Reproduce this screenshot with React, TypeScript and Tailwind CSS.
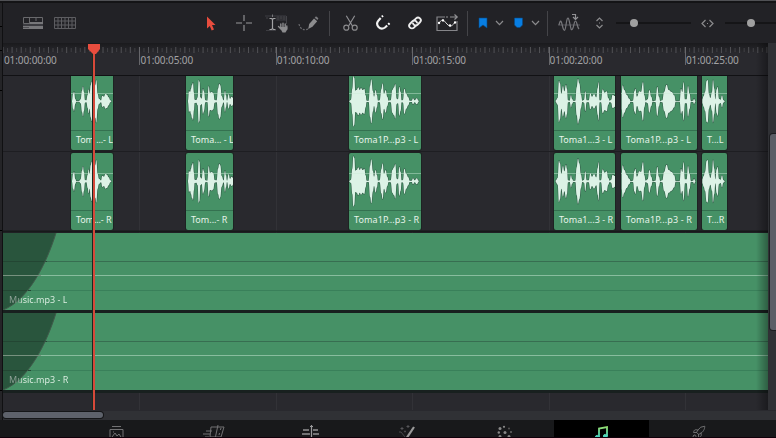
import React from "react";
import { Rocket } from "lucide-react";

type Wave = number[][];

// Envelopes are [x, half amplitude] pairs in thirds of a pixel.
const W1: Wave = [[3, 2], [6, 22], [9, 29], [13, 7], [16, 1], [24, 1], [29, 6], [33, 32], [36, 45], [39, 28], [42, 4], [46, 3], [50, 20], [53, 36], [56, 22], [59, 48], [62, 60], [65, 25], [70, 32], [73, 50], [76, 64], [80, 22], [84, 8], [90, 3], [94, 17], [99, 14], [103, 22], [108, 20], [113, 12], [118, 3], [121, 1]];
const W2: Wave = [[6, 3], [9, 32], [12, 28], [15, 38], [18, 50], [21, 56], [24, 26], [26, 5], [31, 4], [35, 12], [38, 64], [41, 58], [43, 12], [47, 8], [51, 38], [54, 30], [58, 3], [64, 2], [68, 46], [72, 26], [78, 28], [82, 24], [86, 4], [92, 3], [96, 38], [100, 53], [103, 48], [107, 16], [113, 3], [117, 32], [120, 18], [123, 2], [128, 22], [132, 8], [137, 14], [143, 8]];
const W3: Wave = [[1, 2], [6, 5], [10, 38], [13, 76], [16, 70], [19, 32], [23, 34], [28, 42], [32, 34], [36, 40], [41, 34], [46, 38], [50, 18], [53, 2], [59, 2], [63, 46], [67, 66], [72, 30], [75, 14], [80, 34], [84, 18], [87, 2], [92, 3], [97, 36], [101, 54], [105, 22], [110, 34], [115, 14], [119, 2], [125, 3], [130, 34], [135, 42], [139, 52], [143, 8], [147, 6], [151, 44], [155, 28], [158, 3], [162, 4], [166, 38], [172, 22], [178, 12], [182, 2], [188, 2], [192, 9], [197, 3], [203, 9], [209, 2]];
const W4: Wave = [[5, 3], [11, 10], [15, 62], [18, 54], [22, 22], [27, 46], [31, 30], [36, 50], [39, 38], [42, 3], [47, 2], [51, 19], [54, 8], [58, 2], [64, 2], [68, 42], [72, 68], [76, 54], [81, 20], [85, 2], [90, 4], [94, 30], [98, 3], [104, 3], [109, 24], [114, 14], [120, 22], [127, 12], [131, 40], [134, 58], [137, 3], [141, 3], [146, 36], [152, 26], [158, 30], [163, 10], [167, 2], [171, 4], [176, 20], [183, 16]];
const W5: Wave = [[2, 24], [5, 48], [10, 34], [17, 20], [25, 8], [29, 1], [36, 2], [40, 30], [43, 38], [48, 14], [55, 30], [60, 28], [66, 58], [70, 18], [74, 2], [80, 6], [85, 34], [91, 14], [95, 1], [103, 2], [109, 44], [114, 14], [118, 1], [124, 3], [129, 28], [137, 50], [143, 34], [152, 28], [160, 18], [164, 1], [176, 1], [180, 38], [184, 28], [188, 58], [192, 6], [197, 6], [201, 46], [206, 22], [210, 1], [216, 2], [219, 8], [223, 2]];
const W6: Wave = [[1, 6], [5, 16], [9, 28], [14, 62], [17, 64], [21, 22], [25, 10], [30, 28], [33, 64], [37, 38], [40, 6], [44, 36], [47, 44], [51, 8], [56, 5], [60, 18], [64, 4], [68, 1]];

const CLIPS = [
  { box: "ml-[68px] w-[42px] tracking-[-0.1px]", w: 42, wave: W1, l: "Tom ...- L", r: "Tom...- R" },
  { box: "ml-[73px] w-[47px] tracking-normal", w: 47, wave: W2, l: "Toma... - L", r: "Tom...- R" },
  { box: "ml-[116px] w-[72px] tracking-[0.1px]", w: 72, wave: W3, l: "Toma1P...p3 - L", r: "Toma1P...p3 - R" },
  { box: "ml-[133px] w-[61px] tracking-normal", w: 61, wave: W4, l: "Toma1...3 - L", r: "Toma1...3 - R" },
  { box: "ml-[6px] w-[76px] tracking-[0.15px]", w: 76, wave: W5, l: "Toma1P...p3 - L", r: "Toma1P...p3 - R" },
  { box: "ml-[5px] w-[25px] tracking-normal", w: 25, wave: W6, l: "T...L", r: "T...R" },
];

function outline(wave: Wave) {
  const pts = [...wave.map(([x, a]) => [x, 85 - a]), ...[...wave].reverse().map(([x, a]) => [x, 85 + a])];
  return pts
    .map(([x, y], i) => {
      if (i === 0) return `M${x} ${y}`;
      const [px, py] = pts[i - 1];
      const mid = (px + x) / 2;
      return `C${mid} ${py} ${mid} ${y} ${x} ${y}`;
    })
    .join("") + "Z";
}

function Clip({ box, w, wave, label }: { box: string; w: number; wave: Wave; label: string }) {
  return (
    <div className={`${box} h-[77px] shrink-0 overflow-hidden rounded-[2px] bg-[#469166] shadow-[0_0_0_1px_#1d2322]`}>
      <svg className="block h-[57px]" width={w} height="57" viewBox={`0 0 ${w * 3} 171`}>
        <path d={outline(wave)} fill="#dcf2e6" stroke="#315b47" strokeWidth="3.4" paintOrder="stroke" strokeLinejoin="round" />
        <path d={`M0 61.5H${w * 3}`} stroke="#c9ead6" strokeOpacity=".45" strokeWidth="3" />
      </svg>
      <div className="h-5 overflow-hidden whitespace-nowrap border-t border-[#347150] pl-[5px] pt-[2px] text-[9px] leading-[13px] text-[#e6f4ea]">{label}</div>
    </div>
  );
}

function ClipRow({ side }: { side: "l" | "r" }) {
  return (
    <div className="flex h-20 items-start">
      {CLIPS.map((c, i) => (
        <Clip key={i} box={c.box} w={c.w} wave={c.wave} label={c[side]} />
      ))}
    </div>
  );
}

function Music({ label }: { label: string }) {
  return (
    <div className="relative h-20 border-b-[3px] border-[#18201f] bg-[#469166]">
      <svg className="block" width="766" height="77" viewBox="0 0 766 77">
        <path d="M0 28.5H766" stroke="#376e51" />
        <path d="M0 57.5H766" stroke="#39805a" />
        <path d="M0 0H53C43 32 25 67 0 77Z" fill="#29553d" />
        <path d="M0 28.5H44M0 57.5H28" stroke="#234633" />
        <path d="M53 0C43 32 25 67 0 77" fill="none" stroke="#40594a" />
        <path d="M0 42.5H766" stroke="#88bd9e" />
        <path d="M0 42.5H38" stroke="#77917f" />
      </svg>
      <span className="absolute left-[6px] top-[60px] bg-[linear-gradient(100deg,#8ea297_0_11px,#e6f4ea_15px)] bg-clip-text text-[9px] leading-[13px] text-transparent">{label}</span>
    </div>
  );
}

function Icon({ place, w, h, children }: { place: string; w: number; h: number; children: React.ReactNode }) {
  return (
    <svg className={`${place} block shrink-0`} width={w} height={h} viewBox={`0 0 ${w} ${h}`} fill="none" stroke="#8b8b8d" strokeWidth="1.2">
      {children}
    </svg>
  );
}

const Sep = ({ place }: { place: string }) => <div className={`${place} h-[25px] w-px shrink-0 bg-[#444448]`} />;

function Toolbar() {
  return (
    <div className="flex h-10 items-center overflow-hidden bg-[#222226]">
      <Icon place="ml-[20px]" w={20} h={12}>
        <path d="M.5 .5H19.5V6.5H.5ZM6.5 .5V6.5M13 .5V4" stroke="#69696c" strokeWidth="1" />
        <path d="M7 5H20V7H7ZM0 9H20V12H0Z" fill="#77777a" stroke="none" />
        <path d="M0 8H20" stroke="#55555a" strokeWidth="1" />
        <path d="M0 10.5H6" stroke="#505054" strokeWidth="1" />
      </Icon>
      <Icon place="ml-[11px]" w={22} h={12}>
        <path d="M.5 .5H21.5V11.5H.5ZM.5 4H21M.5 8H21M4 0V12M7.5 0V12M11 0V12M14.5 0V12M18 0V12" stroke="#5d5d61" strokeWidth="1" />
      </Icon>
      <Icon place="ml-[130px]" w={11} h={15}>
        <path d="M1 .5 9.5 9H6L8 13.5 5.7 14.5 3.8 10 1 12.5Z" fill="#e84d3e" stroke="none" />
      </Icon>
      <Icon place="ml-[19px]" w={16} h={16}>
        <path d="M8 0V6M8 10V16M0 8H6M10 8H16" stroke="#98989a" strokeWidth="1.1" />
      </Icon>
      <Icon place="ml-[12px]" w={25} h={19}>
        <path d="M1 2H22M2 16.5H12" stroke="#3d3d42" />
        <path d="M1 3H23V7H12V3" fill="#303035" stroke="none" />
        <path d="M3 3V5M14 2V6M17 2V5M20 2V6M22.5 2V10" stroke="#424247" strokeWidth="1" />
        <path d="M5.5 4.5H7.5L8.5 5.5 9.5 4.5H11.5M8.5 5V14.5M5.5 15.5H7.5L8.5 14.5 9.5 15.5H11.5" stroke="#a3a3a5" />
        <path d="M8.5 .5V3" stroke="#77777a" strokeWidth="1" />
        <path d="M14.5 12.5 17 15M16.8 10V14M19 9.3V14M21.2 10V14M22.8 12V15" stroke="#8c8c8e" strokeWidth="1.4" strokeLinecap="round" />
        <path d="M15.5 13H23.2V15.5L21.5 18.5H18.5Z" fill="#8c8c8e" stroke="none" />
      </Icon>
      <Icon place="ml-[9px]" w={21} h={17}>
        <path d="M1 9C2 14 6 16 10 14" stroke="#69696d" strokeDasharray="2 1.4" />
        <path d="M10.2 14 11.2 9 16 3.6 19.2 6.2 14.4 11.8Z" fill="#8c8c8e" stroke="none" />
        <path d="M16.7 2.8 18 1.2 20.4 3.3 19.5 5Z" fill="#7c7c7f" stroke="none" />
      </Icon>
      <Sep place="ml-[10px]" />
      <Icon place="ml-[12px]" w={17} h={17}>
        <path d="M4.3 .8 10.6 11.2M12.7 .8 6.4 11.2" stroke="#8e8e92" strokeWidth="1.2" />
        <circle cx="4.3" cy="12.7" r="2.5" />
        <circle cx="12.7" cy="12.7" r="2.5" />
      </Icon>
      <Icon place="ml-[16px]" w={16} h={16}>
        <path d="M5.7 3 3.5 5.5C-.3 10 5.2 16 10 12.5L12.2 10.5" stroke="#f1f1f1" strokeWidth="2.1" />
        <path d="M6.8 1.8 8 .8M13.2 9.4 14.6 8.2" stroke="#fff" strokeWidth="2.1" />
      </Icon>
      <Icon place="ml-[16px]" w={16} h={16}>
        <g transform="rotate(-45 8 8)" stroke="#ededed" strokeWidth="1.9">
          <path d="M6.5 10.5H4A2.7 2.7 0 0 1 4 5H7.5A2.7 2.7 0 0 1 9.8 9" strokeLinecap="round" />
          <path d="M9.5 5.5H12A2.7 2.7 0 0 1 12 11H8.5A2.7 2.7 0 0 1 6.2 7" strokeLinecap="round" />
        </g>
      </Icon>
      <Icon place="ml-[12px] -mt-px" w={24} h={18}>
        <path d="M10 3H2V16.5H22V7" stroke="#858589" />
        <path d="M11 3H13M15 3H22M19.5 .5 22.2 3 19.5 5.5" stroke="#919194" />
        <path d="M4 9C8 3.5 9 7 12 10S16 13 20 8.5" stroke="#ddd" strokeWidth="1" />
        <path d="M8 6.5h.1M15 11.5h.1M20 8.5h.1M4 9h.1" stroke="#fff" strokeWidth="2.3" strokeLinecap="round" />
      </Icon>
      <Sep place="ml-[8px]" />
      <Icon place="ml-[10px]" w={10} h={12}>
        <path d="M1 1H9V11L5 8 1 11Z" fill="#087ee2" stroke="#064a87" strokeWidth=".6" />
      </Icon>
      <Icon place="ml-[7px]" w={9} h={6}><path d="M1 1 4.5 4.7 8 1" /></Icon>
      <Icon place="ml-[9px]" w={11} h={12}>
        <path d="M1.5 1H9.5V8L7 10.5H4L1.5 8Z" fill="#087ee2" stroke="#064a87" strokeWidth=".6" />
      </Icon>
      <Icon place="ml-[7px]" w={9} h={6}><path d="M1 1 4.5 4.7 8 1" /></Icon>
      <Sep place="ml-[7px]" />
      <Icon place="ml-[9px]" w={24} h={20}>
        <path d="M1 12H23" stroke="#55555a" strokeWidth="1" />
        <path d="M2 12C4 3 5 12 6 15S8 19 9 12 11 2 12.5 9 14 18 15.5 16 17 8 18.5 8 20 14 22 16" stroke="#77777b" />
        <path d="M15 1.5H18.5V6M16 4 18.5 6.5 21 4" stroke="#929295" />
      </Icon>
      <Icon place="ml-[14px]" w={9} h={12}>
        <path d="M1.5 4 4.5 1 7.5 4M1.5 8 4.5 11 7.5 8M4 6H5" />
      </Icon>
      <Slider place="ml-[12px] w-[75px]" knob="ml-[13.5px]" />
      <Icon place="ml-[10px]" w={13} h={9}>
        <path d="M4.5 1 1 4.5 4.5 8M8.5 1 12 4.5 8.5 8M6 4.5H7" />
      </Icon>
      <Slider place="ml-[11px] w-[51px]" knob="ml-[22px]" />
    </div>
  );
}

function Slider({ place, knob }: { place: string; knob: string }) {
  return (
    <div className={`${place} flex h-2 shrink-0 items-center bg-[linear-gradient(transparent_3px,#151517_3px_5px,transparent_5px)]`}>
      <div className={`${knob} size-2 rounded-full bg-[#a0a0a0]`} />
    </div>
  );
}

const MAJORS = [0, 1, 2, 3, 4, 5];
const TIMES = ["01:00:00:00", "01:00:05:00", "01:00:10:00", "01:00:15:00", "01:00:20:00", "01:00:25:00"];

function Ruler() {
  return (
    <div className="relative h-[33px] overflow-hidden border-b border-[#111114] bg-[linear-gradient(#1a1a1d,#29292e_10px)]">
      <svg className="absolute left-0 top-0" width="766" height="32">
        {Array.from({ length: 169 }, (_, i) => (
          <path key={i} d={`M${(i * 4.547).toFixed(2)} ${i % 2 ? 5 : 4}v${i % 2 ? 4 : 6}`} stroke={i % 2 ? "#414145" : "#525256"} />
        ))}
        {MAJORS.slice(1).map((i) => (
          <path key={i} d={`M${Math.round(i * 136.4) + 0.5} 4V22`} stroke="#66666a" />
        ))}
      </svg>
      <div className="flex pl-px pt-[9px] text-[10px] leading-[16px] tracking-[-0.1px] text-[#a2a2a4]">
        {TIMES.map((t) => (
          <span key={t} className="w-[136.4px] shrink-0">{t}</span>
        ))}
      </div>
    </div>
  );
}

const TABS = [
  <g key="m"><path d="M1 4.5H14V15H1ZM3 1.5H12" /><path d="M3 12 6 8 8 11 10 9 12 12M4 7h1" /></g>,
  <g key="c"><path d="M0 6H6M-3 9H4M-1 12H3M5 2H18L15 12H4ZM12 0 9 14" /><path d="M15 3 14.4 5M13.5 8 13 10" /></g>,
  <g key="e"><path d="M0 5H6M-1 9H7M1 13H6M10 5H15M10 9H16M10 13H17" strokeWidth="2.2" /><path d="M8.5 0V15M7 1.5H10" strokeWidth="1.2" stroke="#9a9a9c" /></g>,
  <g key="f"><path d="M6 14 14 2" stroke="#999" strokeWidth="2.2" /><path d="M2 2V5M.5 3.5H3.5M8 0V3M6.5 1.5H9.5" stroke="#555558" /><path d="M-1 7H1L5 12M5 5.5V7.5M4 6.5H6" stroke="#48484b" /></g>,
  <g key="k" fill="#888" stroke="none"><circle cx="7" cy="1.8" r="1.1" /><circle cx="3" cy="3.5" r="1.5" /><circle cx="1.8" cy="7.5" r="1.2" /><circle cx="3" cy="11.5" r="1.5" /><circle cx="8" cy="7.5" r="1.5" /><circle cx="12" cy="3.5" r="1" fill="#555" /><circle cx="14" cy="7" r="1" fill="#666" /><circle cx="12" cy="11.5" r="1.5" /></g>,
  <g key="n" stroke="url(#note)" fill="url(#note)"><path d="M5 12V3.5L13 2V11" fill="none" strokeWidth="1.8" /><ellipse cx="3.4" cy="12" rx="2" ry="1.6" /><ellipse cx="11.4" cy="11" rx="2" ry="1.6" /></g>,
];

function Nav() {
  return (
    <div className="flex h-[18px] overflow-hidden border-b border-[#10000a] bg-[#18191b] pl-[68px]">
      {TABS.map((t, i) => (
        <div key={i} className={`flex shrink-0 justify-center pt-[5px] ${i === 5 ? "ml-px w-[95px] bg-black" : "w-[97px]"}`}>
          <svg className="overflow-visible" width="16" height="16" viewBox="0 0 16 16" fill="none" stroke="#727274">
            <defs><linearGradient id="note" gradientUnits="userSpaceOnUse" x1="0" y1="0" x2="0" y2="14"><stop stopColor="#a1df62" /><stop offset="1" stopColor="#37d4d5" /></linearGradient></defs>
            {t}
          </svg>
        </div>
      ))}
      <div className="flex w-[98px] justify-center pt-[5px]"><Rocket size={15} strokeWidth={1.5} color="#747476" /></div>
    </div>
  );
}

export default function App() {
  return (
    <div className="flex h-[438px] w-[776px] flex-col overflow-hidden bg-[#29292e] font-['Noto_Sans','Open_Sans',sans-serif]">
      <div className="h-[3px] shrink-0 border-b-2 border-[#141416] bg-[#505155]" />
      <div className="flex h-[417px]">
        <div className="flex w-[3px] shrink-0 flex-col border-r border-[#101012] bg-[#242427]">
          <div className="h-6 border-b border-black" />
          <div className="h-6 border-b border-black" />
          <div className="h-10 border-b border-black" />
          <div className="h-[140px] border-b border-black" />
          <div className="h-[160px] border-b border-black" />
        </div>
        <div className="min-w-0 grow">
          <Toolbar />
          <div className="flex h-[367px]">
            <div className="relative w-[765px] shrink-0">
              <Ruler />
              <div className="relative h-[334px] overflow-hidden bg-[#29292e]">
                <svg className="absolute inset-0" width="766" height="334">
                  {MAJORS.slice(1).map((i) => (
                    <path key={i} d={`M${Math.round(i * 136.4) + 0.5} 0V334`} stroke="#323237" />
                  ))}
                  <path d="M0 75.5H766" stroke="#1e1e22" />
                  <path d="M0 155.5H766" stroke="#17191a" strokeWidth="2" />
                </svg>
                <div className="relative -mt-[3px]">
                  <ClipRow side="l" />
                  <ClipRow side="r" />
                  <Music label="Music.mp3 - L" />
                  <Music label="Music.mp3 - R" />
                </div>
              </div>
              <div className="absolute right-0 top-0 h-full w-3 bg-gradient-to-r from-transparent to-black/35" />
              <svg className="absolute left-[84px] top-0" width="14" height="367">
                <path d="M5.5 8V367" stroke="#172b22" />
                <path d="M7 8V367" stroke="#d6493a" strokeWidth="2" />
                <path d="M1 1H13V6L9 11H6L1 6Z" fill="#e84d3e" />
              </svg>
            </div>
            <div className="w-2 shrink-0 bg-[#303135] pt-[91px]">
              <div className="ml-[2px] h-[196px] rounded-l-[3px] bg-[#5b5e66] shadow-[0_0_0_1px_#1c1d20]" />
            </div>
          </div>
          <div className="h-[10px] border-b border-[#151618] bg-[#303135]">
            <div className="mt-px h-[6px] w-[100px] translate-y-px rounded-[3px] bg-[#5e626b] shadow-[0_0_0_1px_#151618]" />
          </div>
        </div>
      </div>
      <Nav />
    </div>
  );
}
